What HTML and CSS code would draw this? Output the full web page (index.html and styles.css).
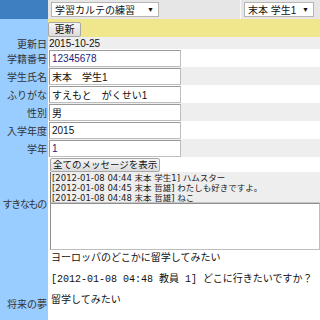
FILE: index.html
```html
<!DOCTYPE html>
<html lang="ja">
<head>
    <meta charset="UTF-8">
    <title>学習カルテ</title>
    <link rel="stylesheet" href="styles.css">
</head>
<body>
    <div class="karte">
        <div class="row head">
            <div class="label"></div>
            <div class="cell head-main">
                <div class="fake-select wide"><span>学習カルテの練習</span><span class="arrow">▼</span></div>
            </div>
            <div class="cell head-side">
                <div class="fake-select"><span>末本 学生1</span><span class="arrow">▼</span></div>
            </div>
        </div>
        <div class="row update">
            <div class="label"></div>
            <div class="cell"><button class="btn">更新</button></div>
        </div>
        <div class="row date gray">
            <div class="label">更新日</div>
            <div class="cell">2015-10-25</div>
        </div>
        <div class="row field">
            <div class="label">学籍番号</div>
            <div class="cell"><input class="text blue" type="text" value="12345678"></div>
        </div>
        <div class="row field gray">
            <div class="label">学生氏名</div>
            <div class="cell"><input class="text" type="text" value="末本　学生1"></div>
        </div>
        <div class="row field">
            <div class="label">ふりがな</div>
            <div class="cell"><input class="text" type="text" value="すえもと　がくせい1"></div>
        </div>
        <div class="row field gray">
            <div class="label">性別</div>
            <div class="cell"><input class="text" type="text" value="男"></div>
        </div>
        <div class="row field">
            <div class="label">入学年度</div>
            <div class="cell"><input class="text" type="text" value="2015"></div>
        </div>
        <div class="row field gray">
            <div class="label">学年</div>
            <div class="cell"><input class="text blue" type="text" value="1"></div>
        </div>
        <div class="row likes">
            <div class="label narrow">すきなもの</div>
            <div class="likes-body">
                <div class="btn-line"><button class="btn">全てのメッセージを表示</button></div>
                <div class="messages">
                    <div>[2012-01-08 04:44 末本 学生1] ハムスター</div>
                    <div>[2012-01-08 04:45 末本 哲雄] わたしも好きですよ。</div>
                    <div>[2012-01-08 04:48 末本 哲雄] ねこ</div>
                </div>
                <div class="memo"></div>
            </div>
        </div>
        <div class="row dream">
            <div class="label">将来の夢</div>
            <div class="dream-body">
                <p>ヨーロッパのどこかに留学してみたい</p>
                <p>[2012-01-08 04:48 教員 1] どこに行きたいですか？</p>
                <p>留学してみたい</p>
            </div>
        </div>
    </div>
</body>
</html>
```

FILE: styles.css
```css
body {
    margin: 0;
    font-family: "Liberation Sans", "Noto Sans CJK JP", sans-serif;
    font-size: 10px;
    color: #111;
    background: #fff;
}
.karte {
    width: 320px;
    height: 320px;
    overflow: hidden;
}
.row {
    display: flex;
}
.label {
    width: 48px;
    flex-shrink: 0;
    box-sizing: border-box;
    background: #99ccff;
    color: #333;
    display: flex;
    align-items: center;
    justify-content: flex-end;
    white-space: nowrap;
    padding-right: 1px;
}
.label.narrow {
    letter-spacing: -1.3px;
    padding-right: 2px;
}
.cell {
    flex: 1;
    display: flex;
    align-items: center;
    padding-left: 1px;
}
.gray .cell {
    background: #eeeeee;
}

/* header */
.head {
    height: 19px;
}
.head .label {
    background: #3d7fc0;
}
.head .cell {
    background: #e6e6e6;
}
.head-main {
    padding-left: 3px;
}
.head-side {
    flex: 0 0 76px;
    border-left: 1px solid #fafafa;
    padding-left: 3px;
}
.fake-select {
    height: 15px;
    width: 70px;
    box-sizing: border-box;
    border: 1px solid #b5b5b5;
    background: #fff;
    display: flex;
    align-items: center;
    justify-content: space-between;
    padding: 0 4px 0 3px;
    font-size: 10px;
}
.fake-select.wide {
    width: 108px;
}
.arrow {
    font-size: 7px;
}

/* update row */
.update {
    height: 18px;
}
.update .cell {
    background: #f0e68c;
    padding-left: 0;
}
.btn {
    font-family: "Liberation Sans", "Noto Sans CJK JP", sans-serif;
    font-size: 10px;
    color: #111;
    height: 15px;
    padding: 0 4px;
    line-height: 13px;
    border: 1px solid #a7a7a7;
    border-radius: 2px;
    background: linear-gradient(#f6f6f6, #dcdcdc);
}
.update .btn {
    width: 33px;
    margin-top: 2px;
}

.date {
    height: 12px;
}
.field {
    height: 18px;
}
.text {
    width: 132px;
    height: 17px;
    box-sizing: border-box;
    margin: 0;
    padding: 0 2px;
    border: 1px solid #bdbdbd;
    border-top-color: #9a9a9a;
    border-left-color: #9a9a9a;
    font-family: "Liberation Sans", "Noto Sans CJK JP", sans-serif;
    font-size: 10px;
    color: #111;
    background: #fff;
}
.text.blue {
    color: #1a237e;
}

/* likes */
.likes-body {
    flex: 1;
    display: grid;
    grid-template-rows: 15px 31px 47px;
    padding-left: 2px;
}
.btn-line {
    display: flex;
    align-items: center;
}
.likes .btn {
    height: 14px;
    line-height: 12px;
    padding: 0 2px;
    font-size: 9.5px;
    white-space: nowrap;
}
.messages {
    box-sizing: border-box;
    background: #eeeeee;
    border-left: 1px solid #777;
    border-bottom: 1px solid #c8c8c8;
    padding: 1px 0 0 1px;
    font-family: "DejaVu Sans", "Noto Sans CJK JP", sans-serif;
    font-size: 8.5px;
    line-height: 10px;
    color: #222;
    white-space: nowrap;
    overflow: hidden;
}
.memo {
    box-sizing: border-box;
    border: 1px solid #bdbdbd;
    border-left-color: #8f8f8f;
    border-top-color: #8f8f8f;
    background: #fff;
}

/* dream */
.dream-body {
    flex: 1;
    display: grid;
    grid-template-rows: 21px 21px 21px 41px;
    padding: 2px 0 0 3px;
    font-family: "Liberation Mono", "Noto Sans CJK JP", monospace;
    font-size: 10px;
    line-height: 14px;
}
.dream p {
    margin: 0;
    white-space: nowrap;
}
```
